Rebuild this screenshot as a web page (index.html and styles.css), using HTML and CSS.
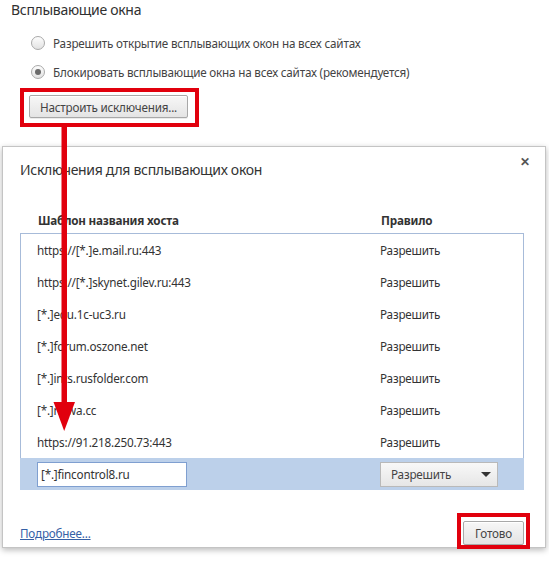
FILE: index.html
```html
<!DOCTYPE html>
<html lang="ru">
<head>
<meta charset="utf-8">
<title>Всплывающие окна</title>
<link rel="stylesheet" href="styles.css">
</head>
<body>
<div class="page">
  <section class="settings">
    <h2 class="section-title">Всплывающие окна</h2>
    <label class="radio-row"><span class="radio"></span><span>Разрешить открытие всплывающих окон на всех сайтах</span></label>
    <label class="radio-row"><span class="radio checked"></span><span>Блокировать всплывающие окна на всех сайтах (рекомендуется)</span></label>
    <div class="btn-row"><button class="btn btn-exceptions">Настроить исключения...</button></div>
  </section>

  <div class="dialog">
    <div class="dialog-head">
      <h3 class="dialog-title">Исключения для всплывающих окон</h3>
      <span class="close">&#x2715;</span>
    </div>
    <div class="cols">
      <span class="col-host">Шаблон названия хоста</span>
      <span class="col-rule">Правило</span>
    </div>
    <div class="list">
      <div class="row"><span class="host">https://[*.]e.mail.ru:443</span><span class="rule">Разрешить</span></div>
      <div class="row"><span class="host">https://[*.]skynet.gilev.ru:443</span><span class="rule">Разрешить</span></div>
      <div class="row"><span class="host">[*.]edu.1c-uc3.ru</span><span class="rule">Разрешить</span></div>
      <div class="row"><span class="host">[*.]forum.oszone.net</span><span class="rule">Разрешить</span></div>
      <div class="row"><span class="host">[*.]ints.rusfolder.com</span><span class="rule">Разрешить</span></div>
      <div class="row"><span class="host">[*.]nowa.cc</span><span class="rule">Разрешить</span></div>
      <div class="row"><span class="host">https://91.218.250.73:443</span><span class="rule">Разрешить</span></div>
      <div class="row row-edit">
        <span class="host"><span class="input">[*.]fincontrol8.ru</span></span>
        <span class="rule"><span class="select">Разрешить<span class="caret"></span></span></span>
      </div>
    </div>
    <div class="dialog-foot">
      <a class="more" href="#">Подробнее...</a>
      <button class="btn btn-done">Готово</button>
    </div>
  </div>

  <div class="mark mark-1"></div>
  <div class="mark mark-2"></div>
  <svg class="arrow" width="549" height="561" viewBox="0 0 549 561">
    <rect x="61.5" y="124" width="5.5" height="282" fill="#e1000d"/>
    <polygon points="53.5,402 75,402 64.2,431" fill="#e1000d"/>
  </svg>
</div>
</body>
</html>
```

FILE: styles.css
```css
html, body {
  margin: 0;
  padding: 0;
  background: #ffffff;
}
body {
  width: 549px;
  height: 561px;
  overflow: hidden;
  font-family: "Noto Sans", "Open Sans", sans-serif;
  font-size: 11.7px;
  letter-spacing: -0.2px;
  color: #333333;
}
.page {
  position: relative;
  width: 549px;
  height: 561px;
}
.settings {
  padding-left: 11px;
  height: 146px;
  box-sizing: border-box;
}
.section-title {
  margin: 0;
  padding-top: 1px;
  height: 27px;
  font-size: 14px;
  letter-spacing: -0.3px;
  line-height: 18px;
  font-weight: normal;
  color: #303030;
}
.radio-row {
  display: flex;
  align-items: center;
  height: 29px;
  padding-left: 20px;
  gap: 8px;
  color: #444;
}
.radio {
  width: 12px;
  height: 12px;
  border-radius: 50%;
  border: 1px solid #a9a9a9;
  background: linear-gradient(#fdfdfd, #e2e2e2);
  position: relative;
  flex: none;
}
.radio.checked::after {
  content: "";
  position: absolute;
  left: 3px;
  top: 3px;
  width: 6px;
  height: 6px;
  border-radius: 50%;
  background: #6a6a6a;
}
.btn-row {
  padding-top: 9px;
  padding-left: 18px;
}
.btn {
  font-family: inherit;
  font-size: 11.7px;
  letter-spacing: -0.2px;
  color: #444;
  border: 1px solid #a8a8a8;
  border-radius: 2px;
  background: linear-gradient(#f7f7f7, #e4e4e4);
  box-shadow: 0 1px 0 rgba(0,0,0,0.08), inset 0 1px 0 #fff;
  padding: 0;
}
.btn-exceptions {
  width: 159px;
  height: 23px;
}

.dialog {
  margin-left: 2px;
  width: 544px;
  height: 402px;
  box-sizing: border-box;
  border: 1px solid #c4c4c4;
  background: #fff;
  box-shadow: 0 2px 6px rgba(0,0,0,0.28);
  display: flex;
  flex-direction: column;
}
.dialog-head {
  display: flex;
  justify-content: space-between;
  align-items: flex-start;
  padding: 9px 17px 0 17px;
  height: 65px;
  flex: none;
  box-sizing: border-box;
}
.dialog-title {
  margin: 5px 0 0 0;
  font-size: 14px;
  letter-spacing: -0.3px;
  line-height: 18px;
  font-weight: normal;
  color: #333;
}
.close {
  font-size: 12px;
  font-weight: bold;
  color: #555;
  line-height: 12px;
  margin-right: -2px;
}
.cols {
  display: grid;
  grid-template-columns: 343px 1fr;
  padding-left: 35px;
  height: 21px;
  flex: none;
  line-height: 16px;
  font-weight: bold;
  color: #333;
}
.list {
  margin-left: 17px;
  width: 504px;
  flex: none;
  box-sizing: border-box;
  border: 1px solid #a7bbd9;
  border-bottom: none;
}
.row {
  display: grid;
  grid-template-columns: 343px 1fr;
  height: 32px;
  align-items: center;
  padding-left: 16px;
  color: #333;
}
.row-edit {
  background: #bcd0ea;
  margin-left: -1px;
  margin-right: -1px;
  padding-left: 17px;
}
.input {
  display: block;
  width: 150px;
  height: 25px;
  box-sizing: border-box;
  border: 1px solid #7f9fd0;
  background: #fff;
  line-height: 23px;
  padding-left: 3px;
}
.select {
  display: flex;
  align-items: center;
  justify-content: space-between;
  width: 118px;
  height: 25px;
  box-sizing: border-box;
  border: 1px solid #b9b9b9;
  background: linear-gradient(#f8f8f8, #e6e6e6);
  padding: 0 6px 0 10px;
  color: #444;
}
.caret {
  width: 0;
  height: 0;
  border-left: 5px solid transparent;
  border-right: 5px solid transparent;
  border-top: 5px solid #333;
}
.dialog-foot {
  flex: 1;
  display: flex;
  justify-content: space-between;
  align-items: flex-start;
  padding: 0 21px 0 17px;
}
.more {
  color: #3560a6;
  text-decoration: underline;
  margin-top: 35px;
}
.btn-done {
  width: 61px;
  height: 24px;
  margin-top: 31px;
}

.mark {
  position: absolute;
  border: 4px solid #e1000d;
  box-sizing: border-box;
}
.mark-1 { left: 20px; top: 88px; width: 179px; height: 39px; }
.mark-2 { left: 457px; top: 513px; width: 73px; height: 36px; }
.arrow {
  position: absolute;
  left: 0;
  top: 0;
  pointer-events: none;
}
```
